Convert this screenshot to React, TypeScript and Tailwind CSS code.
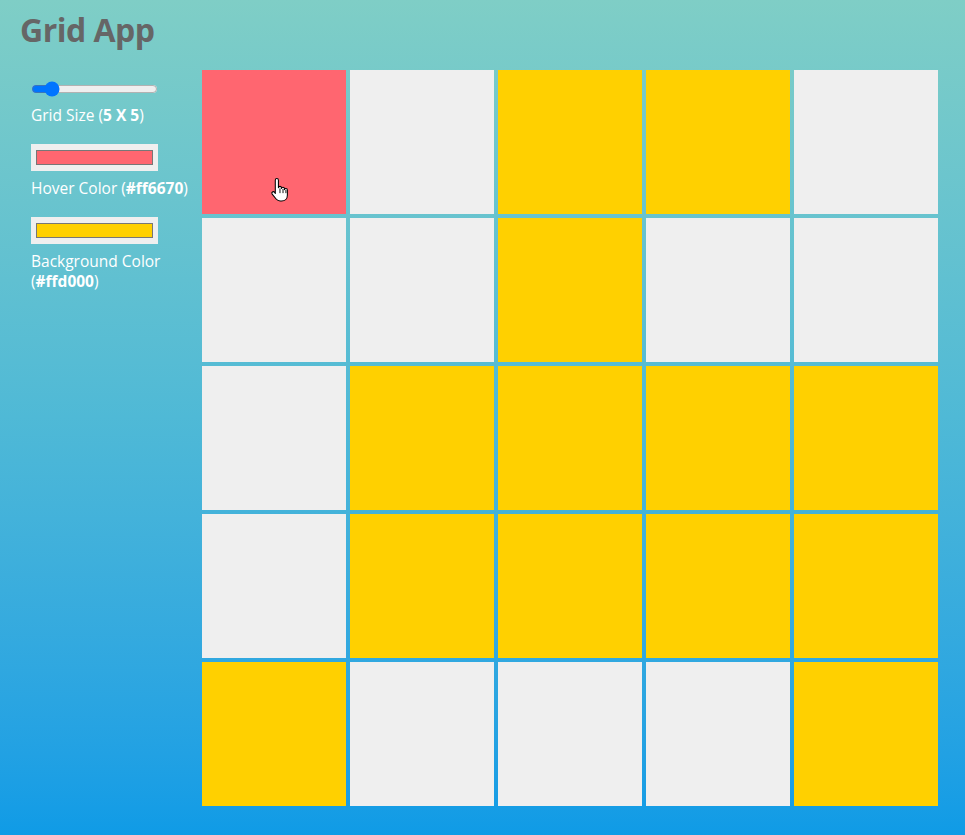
import React, { useState } from "react";

const HOVER = "#ff6670";
const BG = "#ffd000";

// which cells are painted (row-major, 5 x 5)
const painted = [
  0, 0, 1, 1, 0,
  0, 0, 1, 0, 0,
  0, 1, 1, 1, 1,
  0, 1, 1, 1, 1,
  1, 0, 0, 0, 1,
];

const HandCursor: React.FC = () => (
  <svg width="21" height="25" viewBox="0 0 20 24" className="pointer-events-none">
    <path
      d="M6.5 1.5c.9 0 1.5.6 1.5 1.5v7.2c.2-.8.8-1.2 1.5-1.2.8 0 1.4.6 1.4 1.4v.6c.2-.7.8-1.1 1.5-1.1.8 0 1.4.6 1.4 1.4v.8c.2-.6.7-1 1.4-1 .8 0 1.4.6 1.4 1.4v5c0 3.2-2.3 5.5-5.5 5.5H9.6c-1.6 0-2.8-.7-3.8-1.9L2 16.4c-.5-.6-.4-1.5.2-2 .6-.5 1.5-.4 2 .2L5 15.8V3c0-.9.6-1.5 1.5-1.5z"
      fill="#fff"
      stroke="#000"
      strokeWidth="1"
      strokeLinejoin="round"
    />
    <path d="M9.5 11v4.5M12.4 11.5v4M15.2 12.5v3" stroke="#000" strokeWidth="0.9" />
  </svg>
);

const ColorBox: React.FC<{ color: string }> = ({ color }) => (
  <div className="h-[27px] w-[127px] bg-[#efefef] px-[5px] py-[6px]">
    <div className="h-[15px] w-full border border-[#777]" style={{ backgroundColor: color }} />
  </div>
);

export default function App() {
  const [size, setSize] = useState(5);

  return (
    <div
      className="h-screen w-full overflow-hidden bg-linear-to-b from-[#7fcec6] via-[#4fb9d6] to-[#0f9be6] text-white"
      style={{ fontFamily: '"Open Sans", "Noto Sans", sans-serif' }}
    >
      <h1 className="h-[70px] pl-[20px] pt-[9px] text-[32px] leading-[42px] font-bold tracking-[-0.5px] text-[#666]">
        Grid App
      </h1>

      <div className="flex">
        <div className="w-[202px] shrink-0 pl-[31px] text-[15.5px] leading-[20px]">
          <input
            type="range"
            min={1}
            max={35}
            value={size}
            onChange={(e) => setSize(Number(e.target.value))}
            className="mt-[11px] block h-[16px] w-[127px]"
          />
          <div className="mt-[8px]">
            Grid Size (<b>{size} X {size}</b>)
          </div>

          <div className="mt-[19px]">
            <ColorBox color={HOVER} />
          </div>
          <div className="mt-[7px]">
            Hover Color (<b>{HOVER}</b>)
          </div>

          <div className="mt-[19px]">
            <ColorBox color={BG} />
          </div>
          <div className="mt-[7px]">Background Color</div>
          <div>
            (<b>{BG}</b>)
          </div>
        </div>

        <div className="grid w-[736px] grid-cols-5 gap-[4px]">
          {painted.map((p, i) => (
            <div
              key={i}
              className="relative h-[144px]"
              style={{ backgroundColor: i === 0 ? HOVER : p ? BG : "#efefef" }}
            >
              {i === 0 && (
                <div className="absolute left-[68px] top-[107px]">
                  <HandCursor />
                </div>
              )}
            </div>
          ))}
        </div>
      </div>
    </div>
  );
}
